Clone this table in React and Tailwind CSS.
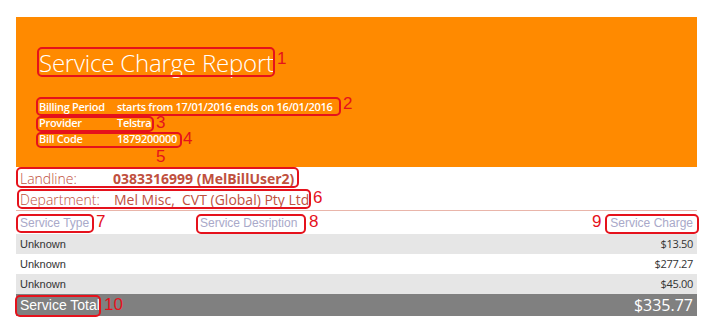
import React from 'react';

const info = [
  { label: 'Billing Period', value: 'starts from 17/01/2016 ends on 16/01/2016' },
  { label: 'Provider', value: 'Telstra' },
  { label: 'Bill Code', value: '1879200000' },
];

const lines = [
  { type: 'Unknown', charge: '$13.50' },
  { type: 'Unknown', charge: '$277.27' },
  { type: 'Unknown', charge: '$45.00' },
];

// red callout markers laid over the report
const marks = [
  { box: 'left-[37px] top-[47px] w-[238px] h-[30px]', num: '1', at: 'left-[277px] top-[49px]' },
  { box: 'left-[36px] top-[97px] w-[305px] h-[19px]', num: '2', at: 'left-[343px] top-[94px]' },
  { box: 'left-[36px] top-[116px] w-[118px] h-[16px]', num: '3', at: 'left-[156px] top-[113px]' },
  { box: 'left-[36px] top-[132px] w-[146px] h-[16px]', num: '4', at: 'left-[183px] top-[129px]' },
  { box: null, num: '5', at: 'left-[156px] top-[147px]' },
  { box: 'left-[16px] top-[167px] w-[283px] h-[21px]', num: null },
  { box: 'left-[17px] top-[189px] w-[294px] h-[20px]', num: '6', at: 'left-[313px] top-[188px]' },
  { box: 'left-[16px] top-[214px] w-[78px] h-[19px]', num: '7', at: 'left-[96px] top-[212px]' },
  { box: 'left-[196px] top-[214px] w-[110px] h-[20px]', num: '8', at: 'left-[309px] top-[212px]' },
  { box: 'left-[605px] top-[214px] w-[94px] h-[20px]', num: '9', at: 'left-[592px] top-[212px]' },
  { box: 'left-[15px] top-[295px] w-[86px] h-[22px]', num: '10', at: 'left-[104px] top-[295px]' },
];

export default function App() {
  return (
    <div className="relative w-[713px] h-[320px] bg-white overflow-hidden">
      <div className="ml-[16px] pt-[17px] w-[681px]">
        <div className="h-[150px] bg-[#ff8a00] pl-[23px] pt-[30px] text-white">
          <h1 className="text-[24px] leading-[32px] font-light tracking-[-0.2px] font-['Open_Sans',sans-serif]">
            Service Charge Report
          </h1>
          <div className="mt-[20px] flex flex-col font-['Open_Sans',sans-serif] font-semibold text-[11px] leading-[16px] tracking-[-0.3px]">
            {info.map((r) => (
              <div key={r.label} className="flex">
                <span className="w-[78px]">{r.label}</span>
                <span>{r.value}</span>
              </div>
            ))}
          </div>
        </div>

        <div className="pl-[4px] text-[#c0503e] text-[14px] font-['Open_Sans',sans-serif]">
          <div className="flex h-[22px] items-center">
            <span className="w-[93px] font-light">Landline:</span>
            <span className="font-bold">0383316999 (MelBillUser2)</span>
          </div>
          <div className="flex h-[21px] items-center">
            <span className="w-[94px] font-light">Department:</span>
            <span>Mel Misc,&nbsp; CVT (Global) Pty Ltd</span>
          </div>
        </div>
        <div className="h-px bg-[#e9b5aa]" />

        <div className="grid grid-cols-[180px_1fr_auto] h-[23px] items-center px-[4px] text-[12px] text-[#a9a9c9] font-['Liberation_Sans',sans-serif]">
          <span>Service Type</span>
          <span>Service Desription</span>
          <span>Service Charge</span>
        </div>

        {lines.map((l, i) => (
          <div
            key={i}
            className={`flex justify-between items-center h-[20px] px-[4px] text-[11px] text-[#333] font-['Liberation_Sans',sans-serif] ${
              i % 2 === 0 ? 'bg-[#e6e6e6]' : 'bg-white'
            }`}
          >
            <span>{l.type}</span>
            <span className="font-['Open_Sans',sans-serif] tracking-[-0.3px]">{l.charge}</span>
          </div>
        ))}

        <div className="flex justify-between items-center h-[22px] px-[4px] bg-[#808080] text-white">
          <span className="text-[14px] font-['Liberation_Sans',sans-serif]">Service Total</span>
          <span className="text-[16px] font-['Open_Sans',sans-serif]">$335.77</span>
        </div>
      </div>

      {marks.map((m, i) => (
        <React.Fragment key={i}>
          {m.box && <div className={`absolute ${m.box} border-2 border-[#e5121c] rounded-[5px]`} />}
          {m.num && (
            <span className={`absolute ${m.at} text-[17px] leading-[20px] text-[#e5121c] font-['Liberation_Sans',sans-serif]`}>
              {m.num}
            </span>
          )}
        </React.Fragment>
      ))}
    </div>
  );
}
